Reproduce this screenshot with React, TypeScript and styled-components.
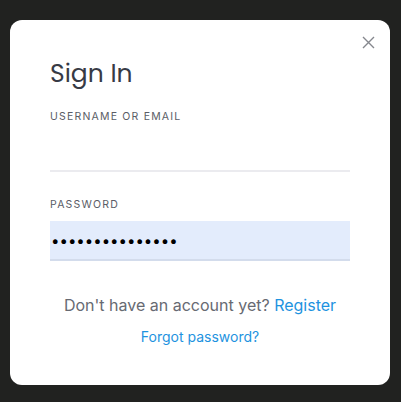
import styled, {createGlobalStyle} from 'styled-components'

const GlobalStyle = createGlobalStyle`
  html, body {
    margin: 0;
    padding: 0;
    background: #212220;
    font-family: Inter, "Noto Sans", sans-serif;
  }
`

const Backdrop = styled.div`
  width: 401px;
  height: 402px;
  padding: 20px 11px 17px 10px;
  box-sizing: border-box;
`

const Modal = styled.div`
  position: relative;
  height: 100%;
  background: #fff;
  border-radius: 12px;
  padding: 40px 40px 0;
  box-sizing: border-box;
`

const Close = styled.button`
  position: absolute;
  top: 12px;
  right: 12px;
  width: 20px;
  height: 20px;
  padding: 0;
  border: none;
  background: none;
  display: flex;
  align-items: center;
  justify-content: center;
  cursor: pointer;
`

const Title = styled.h2`
  margin: 0 0 22px;
  font-family: Poppins, "Open Sans", sans-serif;
  font-weight: 400;
  font-size: 25px;
  line-height: 28px;
  color: #373a45;
`

const Field = styled.label`
  display: flex;
  flex-direction: column;
  margin-bottom: 26px;
`

const Label = styled.span`
  font-size: 10.5px;
  letter-spacing: 1.2px;
  text-transform: uppercase;
  color: #5a5d66;
  line-height: 14px;
`

const Input = styled.input<{ filled?: boolean }>`
  margin-top: ${p => (p.filled ? '9px' : '8px')};
  height: 40px;
  box-sizing: border-box;
  border: none;
  border-bottom: 2px solid ${p => (p.filled ? '#d3dcec' : '#ebebef')};
  background: ${p => (p.filled ? '#e3ecfc' : '#fff')};
  padding: 0 1px;
  font-family: Inter, sans-serif;
  font-size: 15px;
  color: #000;
  outline: none;
`

const Footer = styled.div`
  display: flex;
  flex-direction: column;
  align-items: center;
  margin-top: 34px;
  gap: 12px;
`

const Prompt = styled.p`
  margin: 0;
  font-size: 16px;
  line-height: 20px;
  color: #676a72;
`

const Link = styled.a<{ small?: boolean }>`
  color: #1e93e0;
  text-decoration: none;
  font-size: ${p => (p.small ? '14px' : 'inherit')};
  line-height: 20px;
`

export default function App() {
    return (
        <>
            <GlobalStyle/>
            <Backdrop>
                <Modal>
                    <Close aria-label="close">
                        <svg width="13" height="13" viewBox="0 0 13 13">
                            <path d="M1 1L12 12M12 1L1 12" stroke="#85878d" strokeWidth="1.4"/>
                        </svg>
                    </Close>
                    <Title>Sign In</Title>
                    <Field>
                        <Label>Username or email</Label>
                        <Input type="text"/>
                    </Field>
                    <Field>
                        <Label>Password</Label>
                        <Input type="password" filled defaultValue="supersecret1234"/>
                    </Field>
                    <Footer>
                        <Prompt>Don't have an account yet? <Link href="#">Register</Link></Prompt>
                        <Link href="#" small>Forgot password?</Link>
                    </Footer>
                </Modal>
            </Backdrop>
        </>
    )
}
